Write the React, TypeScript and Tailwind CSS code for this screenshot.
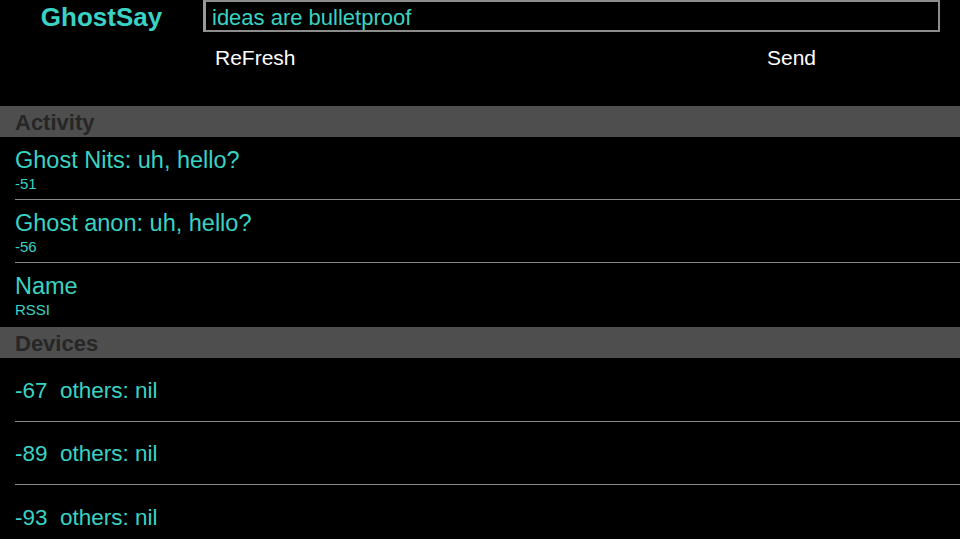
import React from 'react';

type Msg = { title: string; sub: string };

const activity: Msg[] = [
  { title: 'Ghost Nits: uh, hello?', sub: '-51' },
  { title: 'Ghost anon: uh, hello?', sub: '-56' },
  { title: 'Name', sub: 'RSSI' },
];

const devices = ['-67  others: nil', '-89  others: nil', '-93  others: nil'];

const SectionHeader: React.FC<{ label: string }> = ({ label }) => (
  <div className="h-[31px] bg-[#4e4e4e] pl-[15px] flex items-center pt-[2px]">
    <span className="text-[22px] font-bold text-[#262626] leading-none">{label}</span>
  </div>
);

const App: React.FC = () => {
  return (
    <div
      className="w-[960px] h-[539px] bg-black overflow-hidden"
      style={{ fontFamily: '"Liberation Sans", Arial, sans-serif' }}
    >
      {/* top bar */}
      <div className="h-[106px]">
        <div className="flex h-[32px]">
          <div className="w-[203px] flex justify-center items-center pt-[2px]">
            <span className="text-[26px] font-bold text-[#3ad3c3] leading-none">GhostSay</span>
          </div>
          <div className="flex-1 mr-[20px] border-2 border-[#8c8c8c] border-l-[3px] border-l-[#9a9a9a] flex items-center pl-[6px] pt-[4px]">
            <span className="text-[22px] text-[#3ad3c3] leading-none">ideas are bulletproof</span>
          </div>
        </div>
        <div className="flex h-[50px] items-center">
          <span className="ml-[215px] text-[21px] text-white leading-none">ReFresh</span>
          <span className="ml-auto mr-[144px] text-[21px] text-white leading-none">Send</span>
        </div>
      </div>

      <SectionHeader label="Activity" />
      {activity.map((m, i) => (
        <div key={m.title} className="pl-[15px]">
          <div
            className={
              'flex flex-col pt-[10px] ' +
              (i < activity.length - 1 ? 'h-[63px] border-b border-[#8a8a8a]' : 'h-[64px]')
            }
          >
            <span className="text-[23.5px] text-[#3ad3c3] leading-[26px]">{m.title}</span>
            <span className="text-[15px] text-[#3ad3c3] leading-[18px] mt-[2px]">{m.sub}</span>
          </div>
        </div>
      ))}

      <SectionHeader label="Devices" />
      {devices.map((d, i) => (
        <div key={d} className="pl-[15px]">
          <div
            className={
              'flex items-center pt-[3px] ' +
              (i === 0 ? 'h-[64px] ' : 'h-[63px] ') +
              (i < devices.length - 1 ? 'border-b border-[#8a8a8a]' : '')
            }
          >
            <span className="text-[22.5px] text-[#3ad3c3] leading-none whitespace-pre">{d}</span>
          </div>
        </div>
      ))}
    </div>
  );
};

export default App;
